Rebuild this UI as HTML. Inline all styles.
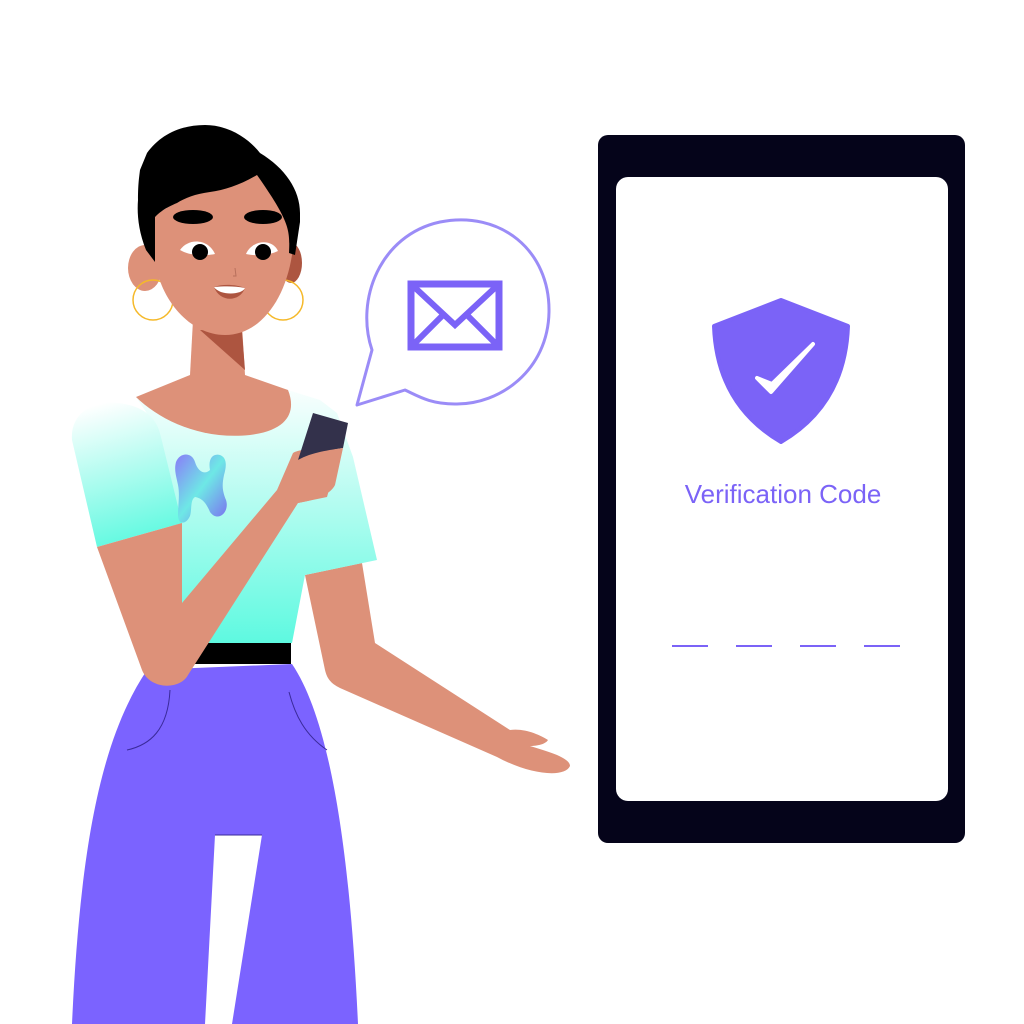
<!DOCTYPE html>
<html><head><meta charset="utf-8"><style>
html,body{margin:0;padding:0;background:#fff;width:1024px;height:1024px;overflow:hidden}
svg{display:block}
</style></head><body>
<svg width="1024" height="1024" viewBox="0 0 1024 1024" xmlns="http://www.w3.org/2000/svg">
<defs>
<linearGradient id="sh" x1="0" y1="0" x2="0" y2="1"><stop offset="0" stop-color="#fff"/><stop offset="1" stop-color="#5ef9e0"/></linearGradient>
<linearGradient id="sl" x1="0.3" y1="0" x2="0.5" y2="1"><stop offset="0" stop-color="#fff"/><stop offset="1" stop-color="#5ef9e0"/></linearGradient>
<linearGradient id="lg" x1="0" y1="0" x2="1" y2="1"><stop offset="0" stop-color="#8a7cf8"/><stop offset="0.5" stop-color="#6ee8e6"/><stop offset="1" stop-color="#7b6cf0"/></linearGradient>
</defs>
<!-- device -->
<rect x="598" y="135" width="367" height="708" rx="10" fill="#05041a"/>
<rect x="616" y="177" width="332" height="624" rx="12" fill="#fff"/>
<path d="M781 300 L848 326 C846 380 822 418 781 442 C740 418 716 380 714 326 Z" fill="#7b63f7" stroke="#7b63f7" stroke-width="4" stroke-linejoin="round"/>
<path d="M757 378 L771 392 L813 344 L772 384 Z" fill="#fff" stroke="#fff" stroke-width="4" stroke-linejoin="round"/>
<text x="783" y="503" text-anchor="middle" font-family="Liberation Sans, sans-serif" font-size="26" fill="#7b63f7">Verification Code</text>
<g stroke="#7b63f7" stroke-width="2"><line x1="672" y1="646" x2="708" y2="646"/><line x1="736" y1="646" x2="772" y2="646"/><line x1="800" y1="646" x2="836" y2="646"/><line x1="864" y1="646" x2="900" y2="646"/></g>
<!-- bubble -->
<path d="M372 350 C355 300 380 235 440 222 C500 210 550 250 549 312 C548 370 500 405 455 404 C430 404 418 396 405 390 L357 405 Z" fill="#fff" stroke="#9b8cf7" stroke-width="3" stroke-linejoin="round"/>
<rect x="411" y="284" width="88" height="63" fill="none" stroke="#7b63f7" stroke-width="7"/>
<path d="M411 284 L455 325 L499 284 M411 347 L443 315 M499 347 L467 315" fill="none" stroke="#7b63f7" stroke-width="6"/>
<!-- pants -->
<path d="M147 670 L292 664 C330 720 350 850 358 1024 L232 1024 L262 835 L215 835 L205 1024 L72 1024 C80 850 100 740 147 670 Z" fill="#7b63ff"/>
<path d="M170 690 C168 730 150 745 127 750 M289 692 C295 715 305 735 327 750" fill="none" stroke="#3a2a9a" stroke-width="1"/>
<line x1="215" y1="835" x2="262" y2="835" stroke="#3a2a9a" stroke-width="1"/>
<!-- belt -->
<path d="M198 643 L291 643 L291 664 L190 664 Z" fill="#000"/>
<!-- neck -->
<path d="M193 320 L242 325 L245 375 L190 375 Z" fill="#dd9179"/>
<path d="M200 330 L242 332 L245 370 Z" fill="#ad5540"/>
<!-- right arm -->
<path d="M305 575 L362 563 L375 643 L510 730 C525 728 540 735 548 740 C545 745 535 746 530 746 C550 752 570 758 570 766 C565 778 530 775 497 757 L340 688 C330 683 327 678 325 670 Z" fill="#dd9179"/>
<!-- shirt body -->
<path d="M136 397 L177 380 L288 390 L320 400 L337 413 L353 457 L377 560 L305 575 L292 643 L203 643 L182 603 L160 433 Z" fill="url(#sh)"/>
<path d="M72 440 C70 412 95 400 117 403 C140 405 155 415 160 433 L182 523 L97 547 Z" fill="url(#sl)"/>
<!-- collar skin -->
<path d="M136 397 L190 375 L245 375 L288 390 C296 410 290 430 250 435 C200 440 160 420 136 397 Z" fill="#dd9179"/>
<!-- logo -->
<path d="M176 462 C180 452 192 452 195 462 C198 472 205 475 210 470 C208 460 212 453 220 455 C228 458 226 468 224 475 C222 485 222 490 226 500 C230 512 218 523 210 512 C205 500 200 498 195 497 C190 500 192 510 190 516 C186 525 178 525 178 515 C178 505 180 495 178 485 C176 475 174 470 176 462 Z" fill="url(#lg)"/>
<!-- left arm -->
<path d="M97 547 L182 523 L182 603 L277 490 L293 453 C300 448 330 448 340 450 L327 497 L298 503 L188 675 C180 690 150 690 142 670 Z" fill="#dd9179"/>
<!-- phone in hand -->
<path d="M313 413 L348 423 L343 448 C330 450 310 455 298 460 Z" fill="#33314b"/>
<path d="M298 460 C312 452 330 450 343 448 L335 485 C330 495 315 500 298 503 L285 500 Z" fill="#dd9179"/>
<!-- ears & earrings -->
<ellipse cx="145" cy="268" rx="17" ry="23" fill="#dd9179"/>
<ellipse cx="291" cy="263" rx="11" ry="20" fill="#ad5540"/>
<circle cx="153" cy="300" r="20" fill="none" stroke="#f5b92a" stroke-width="1.5"/>
<circle cx="283" cy="300" r="20" fill="none" stroke="#f5b92a" stroke-width="1.5"/>
<!-- face -->
<path d="M155 215 L200 188 L257 170 L288 210 L292 255 C285 300 260 335 225 335 C190 335 160 300 155 260 Z" fill="#dd9179"/>
<!-- hair -->
<path d="M140 170 L147 153 C160 135 180 125 205 125 C230 125 250 140 260 153 C285 168 300 190 300 213 L300 222 L295 255 L289 253 C290 230 290 222 257 175 C240 185 225 190 210 192 C195 194 185 198 177 203 C165 208 160 212 155 217 L155 262 L146 250 C138 230 137 213 138 200 C138 185 139 178 140 170 Z" fill="#000"/>
<!-- brows -->
<ellipse cx="193" cy="217" rx="20" ry="7" fill="#000"/>
<ellipse cx="263" cy="217" rx="19" ry="7" fill="#000"/>
<!-- eyes -->
<path d="M180 250 C188 238 208 238 215 254 C205 256 190 256 180 250 Z" fill="#fff"/>
<circle cx="200" cy="252" r="8" fill="#000"/>
<path d="M246 254 C252 240 272 238 278 251 C268 256 255 256 246 254 Z" fill="#fff"/>
<circle cx="263" cy="252" r="8" fill="#000"/>
<path d="M235 268 L236 276 L233 276" fill="none" stroke="#b8705c" stroke-width="1"/>
<path d="M214 287 C222 284 235 284 245 288 C240 302 220 303 214 287 Z" fill="#ad5540"/>
<path d="M214 287 C225 286 235 286 245 288 C242 295 220 296 214 287 Z" fill="#fff"/>
</svg>
</body></html>
